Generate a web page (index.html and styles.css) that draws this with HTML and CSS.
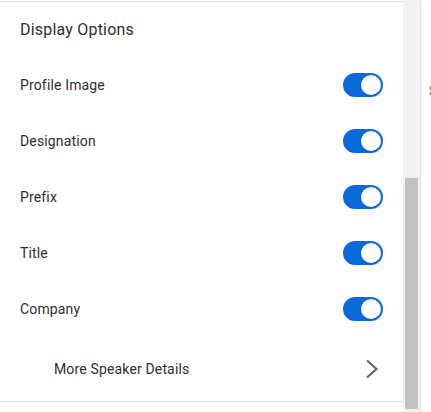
FILE: index.html
```html
<!DOCTYPE html>
<html>
<head>
<meta charset="utf-8">
<link rel="stylesheet" href="styles.css">
</head>
<body>
<div class="layout">
  <div class="panel">
    <div class="heading">Display Options</div>
    <div class="row"><span class="label">Profile Image</span><span class="toggle"><span class="knob"></span></span></div>
    <div class="row"><span class="label">Designation</span><span class="toggle"><span class="knob"></span></span></div>
    <div class="row"><span class="label">Prefix</span><span class="toggle"><span class="knob"></span></span></div>
    <div class="row"><span class="label">Title</span><span class="toggle"><span class="knob"></span></span></div>
    <div class="row"><span class="label">Company</span><span class="toggle"><span class="knob"></span></span></div>
    <div class="row more">
      <span class="label">More Speaker Details</span>
      <svg class="chev" width="14" height="20" viewBox="0 0 14 20"><polyline points="2,1.5 11.5,10 2,18.5" fill="none" stroke="#62666c" stroke-width="2.2"/></svg>
    </div>
  </div>
  <div class="scrollbar"><div class="thumb"></div></div>
  <div class="side"><span class="side-text">Search</span></div>
</div>
</body>
</html>
```
FILE: styles.css
```css
html, body {
  margin: 0;
  padding: 0;
  background: #fff;
}
body {
  width: 431px;
  height: 412px;
  overflow: hidden;
  font-family: Roboto, "Liberation Sans", sans-serif;
  color: #2e2e2e;
}
.layout {
  display: flex;
  height: 412px;
}
.panel {
  width: 403px;
  flex: none;
  display: flex;
  flex-direction: column;
  padding-top: 1px;
  box-sizing: border-box;
}
.panel::before {
  content: "";
  display: block;
  height: 1px;
  background: #e2e2e2;
}
.heading {
  height: 55px;
  display: flex;
  align-items: center;
  padding-left: 20px;
  font-size: 16px;
  letter-spacing: 0.2px;
}
.row {
  height: 56px;
  display: flex;
  align-items: center;
  justify-content: space-between;
  padding: 0 20px;
  font-size: 14px;
  letter-spacing: 0.15px;
}
.row.more {
  height: 64px;
  padding-left: 54px;
  padding-right: 24px;
  border-bottom: 1px solid #e0e0e0;
}
.toggle {
  width: 40px;
  height: 24px;
  border-radius: 12px;
  background: #0a6ada;
  display: flex;
  align-items: center;
  justify-content: flex-end;
  padding: 0 2px;
  box-sizing: border-box;
}
.knob {
  width: 20px;
  height: 20px;
  border-radius: 50%;
  background: #fff;
}
.chev {
  display: block;
}
.scrollbar {
  width: 17px;
  flex: none;
  background: #f1f1f1;
  border-right: 1px solid #e4e4e4;
  display: flex;
  flex-direction: column;
  align-items: center;
}
.thumb {
  width: 13px;
  height: 231px;
  margin-top: 178px;
  background: #c1c1c1;
}
.side {
  flex: 1;
  overflow: hidden;
  padding-left: 8px;
  padding-top: 83px;
  font-size: 14px;
  color: #555;
  white-space: nowrap;
  box-shadow: inset 1px 0 2px rgba(0,0,0,0.04);
}
```
